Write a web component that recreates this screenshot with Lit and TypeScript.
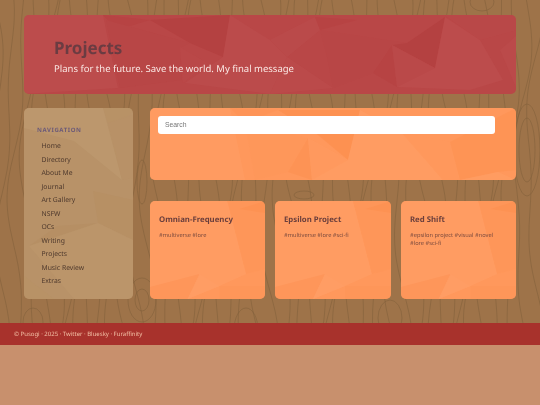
import { LitElement, html, css, svg } from "lit";
import { customElement } from "lit/decorators.js";

type Facet = [string, string];

function woodLines() {
  const out: ReturnType<typeof svg>[] = [];
  for (let i = 0; i < 46; i++) {
    const base = i * 12 - 6;
    let d = "";
    for (let y = -10; y <= 335; y += 5) {
      const x =
        base +
        Math.sin(y / 26 + i * 1.7) * 4 +
        Math.sin(y / 58 + i * 0.6) * 7;
      d += (y === -10 ? "M" : "L") + x.toFixed(1) + " " + y + " ";
    }
    out.push(svg`<path d=${d}></path>`);
  }
  const rings: [number, number, number, number][] = [
    [142, 300, 7, 11], [142, 300, 14, 22],
    [33, 322, 10, 14], [142, 182, 5, 22], [246, 330, 12, 22],
    [304, 195, 10, 4], [390, 318, 12, 18],
    [527, 150, 8, 32], [527, 150, 13, 46],
    [482, 2, 12, 9],
  ];
  for (const [cx, cy, rx, ry] of rings) {
    out.push(svg`<ellipse cx=${cx} cy=${cy} rx=${rx} ry=${ry}></ellipse>`);
  }
  return out;
}

const headerFacets: Facet[] = [
  ["0,0 79,0 94,73 0,79", "#bf5050"],
  ["79,0 126,5 93,15", "#b64040"],
  ["82,5 166,28 156,33 158,65 96,73", "#b84545"],
  ["126,5 206,0 199,42 166,28", "#b13c3c"],
  ["156,32 183,48 159,68", "#bc4a4a"],
  ["206,0 246,25 263,42 246,79 161,68 199,42", "#bd4f4f"],
  ["246,25 291,2 296,15 263,42", "#bc4e4e"],
  ["291,2 333,5 296,15", "#b74040"],
  ["296,15 383,28 363,40 349,58 309,73 303,42", "#b94646"],
  ["421,2 411,53 368,30 383,28", "#b13c3c"],
  ["368,30 373,72 349,58", "#b64040"],
  ["368,30 411,53 373,72", "#bc4b4b"],
  ["421,2 456,25 479,65 446,75 373,72 411,53", "#bf5050"],
  ["421,0 492,0 492,15 456,25", "#bb4a4a"],
  ["492,21 476,35 492,72", "#bd4d4d"],
  ["263,42 309,73 246,79", "#bd4e4e"],
];

const sideFacets: Facet[] = [
  ["0,0 79,0 98,72 50,33 0,20", "#bf9c72"],
  ["79,0 109,0 106,7 84,15", "#b99265"],
  ["84,15 109,7 109,70 98,72", "#b89166"],
  ["69,83 109,92 109,132 74,115", "#b68e62"],
  ["33,118 74,115 5,138", "#b48d62"],
  ["5,138 74,115 109,132 109,191 50,191", "#bd986c"],
  ["0,168 30,191 0,191", "#b89265"],
];

const searchFacets: Facet[] = [
  ["0,0 80,0 95,72 0,72", "#ff9f66"],
  ["80,0 128,2 95,15", "#fd9355"],
  ["95,15 158,30 138,64 105,72", "#fe975a"],
  ["128,2 210,2 198,52 168,27", "#fb8d4a"],
  ["158,30 162,72 138,64", "#fc9050"],
  ["158,30 198,52 162,72", "#ff9c62"],
  ["210,2 252,25 293,72 162,72 198,52", "#ffa068"],
  ["252,25 300,34 310,72 293,72", "#ff9a5e"],
  ["300,34 366,0 366,62 348,64 310,72", "#fd9251"],
  ["348,64 366,72 310,72", "#ffa067"],
];

const cardFacets: Facet[] = [
  ["0,0 78,0 97,73 70,85 38,98 0,98", "#ffa068"],
  ["78,0 116,0 116,68 97,73", "#fe9658"],
  ["90,8 116,0 116,12", "#fc8f4d"],
  ["0,86 50,73 38,98 0,98", "#fd9559"],
  ["70,85 116,85 116,98 70,98", "#fd9558"],
  ["50,73 70,85 38,98", "#ffa26c"],
];

function facets(list: Facet[], w: number, h: number) {
  return html`<svg class="facets" viewBox="0 0 ${w} ${h}" preserveAspectRatio="none" aria-hidden="true">
    ${list.map(([p, c]) => svg`<polygon points=${p} fill=${c}></polygon>`)}
  </svg>`;
}

const NAV = ["Home","Directory","About Me","Journal","Art Gallery","NSFW","OCs","Writing","Projects","Music Review","Extras"];
const CARDS: [string, string[]][] = [
  ["Omnian-Frequency", ["#multiverse #lore"]],
  ["Epsilon Project", ["#multiverse #lore #sci-fi"]],
  ["Red Shift", ["#epsilon project #visual #novel", "#lore #sci-fi"]],
];

@customElement("app-root")
export class AppRoot extends LitElement {
  static styles = css`
    :host {
      display: block;
      width: 540px;
      height: 405px;
      overflow: hidden;
      background: #c8906d;
      font-family: "Noto Sans", sans-serif;
      text-rendering: geometricPrecision;
      filter: blur(0.3px);
    }
    .wood {
      position: relative;
      height: 323px;
      box-sizing: border-box;
      padding: 15px 24px 0;
      background: #9e7349;
      overflow: hidden;
    }
    .grain {
      position: absolute;
      left: 0;
      top: 0;
      width: 540px;
      height: 323px;
      fill: none;
      stroke: #80603a;
      stroke-width: 0.55;
    }
    .panel {
      position: relative;
      overflow: hidden;
      border-radius: 5px;
    }
    .panel > * {
      position: relative;
    }
    .panel > .facets {
      position: absolute;
      left: 0;
      top: 0;
      width: 100%;
      height: 100%;
      opacity: 0.55;
    }
    .header {
      height: 79px;
      box-sizing: border-box;
      padding: 21px 30px 0;
      background: #b94747;
    }
    h1 {
      margin: 0;
      font-size: 17px;
      line-height: 23px;
      font-weight: 700;
      color: #6b3c42;
    }
    .sub {
      margin: 2px 0 0;
      font-size: 9.5px;
      line-height: 15px;
      color: #fbe8e4;
    }
    .columns {
      position: relative;
      display: grid;
      grid-template-columns: 109px 1fr;
      gap: 17px;
      margin-top: 14px;
    }
    .side {
      height: 191px;
      box-sizing: border-box;
      padding: 18px 0 0 13px;
      background: #b89268;
    }
    .side h2 {
      margin: 0 0 4px;
      font-size: 6px;
      line-height: 9px;
      font-weight: 700;
      letter-spacing: 0.6px;
      color: #6c5a78;
    }
    .side ul {
      list-style: none;
      margin: 0;
      padding: 0 0 0 4.5px;
    }
    .side li {
      font-size: 6.8px;
      line-height: 13.5px;
      color: #4d382c;
    }
    .right {
      display: flex;
      flex-direction: column;
      gap: 21px;
    }
    .search {
      height: 72px;
      box-sizing: border-box;
      padding: 8px;
      background: #ff985c;
    }
    .search .box {
      display: block;
      width: 337px;
      height: 18px;
      box-sizing: border-box;
      padding: 0 7px;
      border: 0;
      outline: 0;
      border-radius: 3px;
      background: #fff;
      font: 6.8px/18px "Liberation Sans", Arial, sans-serif;
    }
    .search .box::placeholder {
      color: #777;
      opacity: 1;
    }
    .cards {
      display: grid;
      grid-template-columns: 115px 116px 115px;
      gap: 10px;
    }
    .card {
      height: 98px;
      box-sizing: border-box;
      padding: 13px 9px 0;
      background: #ff985c;
    }
    .card h3 {
      margin: 0;
      font-size: 7.8px;
      line-height: 12px;
      font-weight: 700;
      color: #6b3f3c;
    }
    .tags {
      margin: 5px 0 0;
      font-size: 5.7px;
      line-height: 8px;
      color: #7a4a3e;
    }
    .tags span {
      display: block;
      white-space: nowrap;
    }
    footer {
      height: 22px;
      box-sizing: border-box;
      padding-left: 14px;
      background: #a8322c;
      font-size: 6px;
      line-height: 22px;
      color: #f2bfa4;
    }
  `;

  render() {
    return html`
      <div class="wood">
        <svg class="grain" viewBox="0 0 540 323" aria-hidden="true">${woodLines()}</svg>
        <header class="panel header">
          ${facets(headerFacets, 492, 79)}
          <h1>Projects</h1>
          <p class="sub">Plans for the future. Save the world. My final message</p>
        </header>
        <div class="columns">
          <nav class="panel side">
            ${facets(sideFacets, 109, 191)}
            <h2>NAVIGATION</h2>
            <ul>${NAV.map((n) => html`<li>${n}</li>`)}</ul>
          </nav>
          <div class="right">
            <section class="panel search">
              ${facets(searchFacets, 366, 72)}
              <input class="box" placeholder="Search" />
            </section>
            <section class="cards">
              ${CARDS.map(([t, tags]) => html`
                <article class="panel card">
                  ${facets(cardFacets, 116, 98)}
                  <h3>${t}</h3>
                  <p class="tags">${tags.map((l) => html`<span>${l}</span>`)}</p>
                </article>`)}
            </section>
          </div>
        </div>
      </div>
      <footer>© Pusogi · 2025 · Twitter · Bluesky · Furaffinity</footer>
    `;
  }
}
